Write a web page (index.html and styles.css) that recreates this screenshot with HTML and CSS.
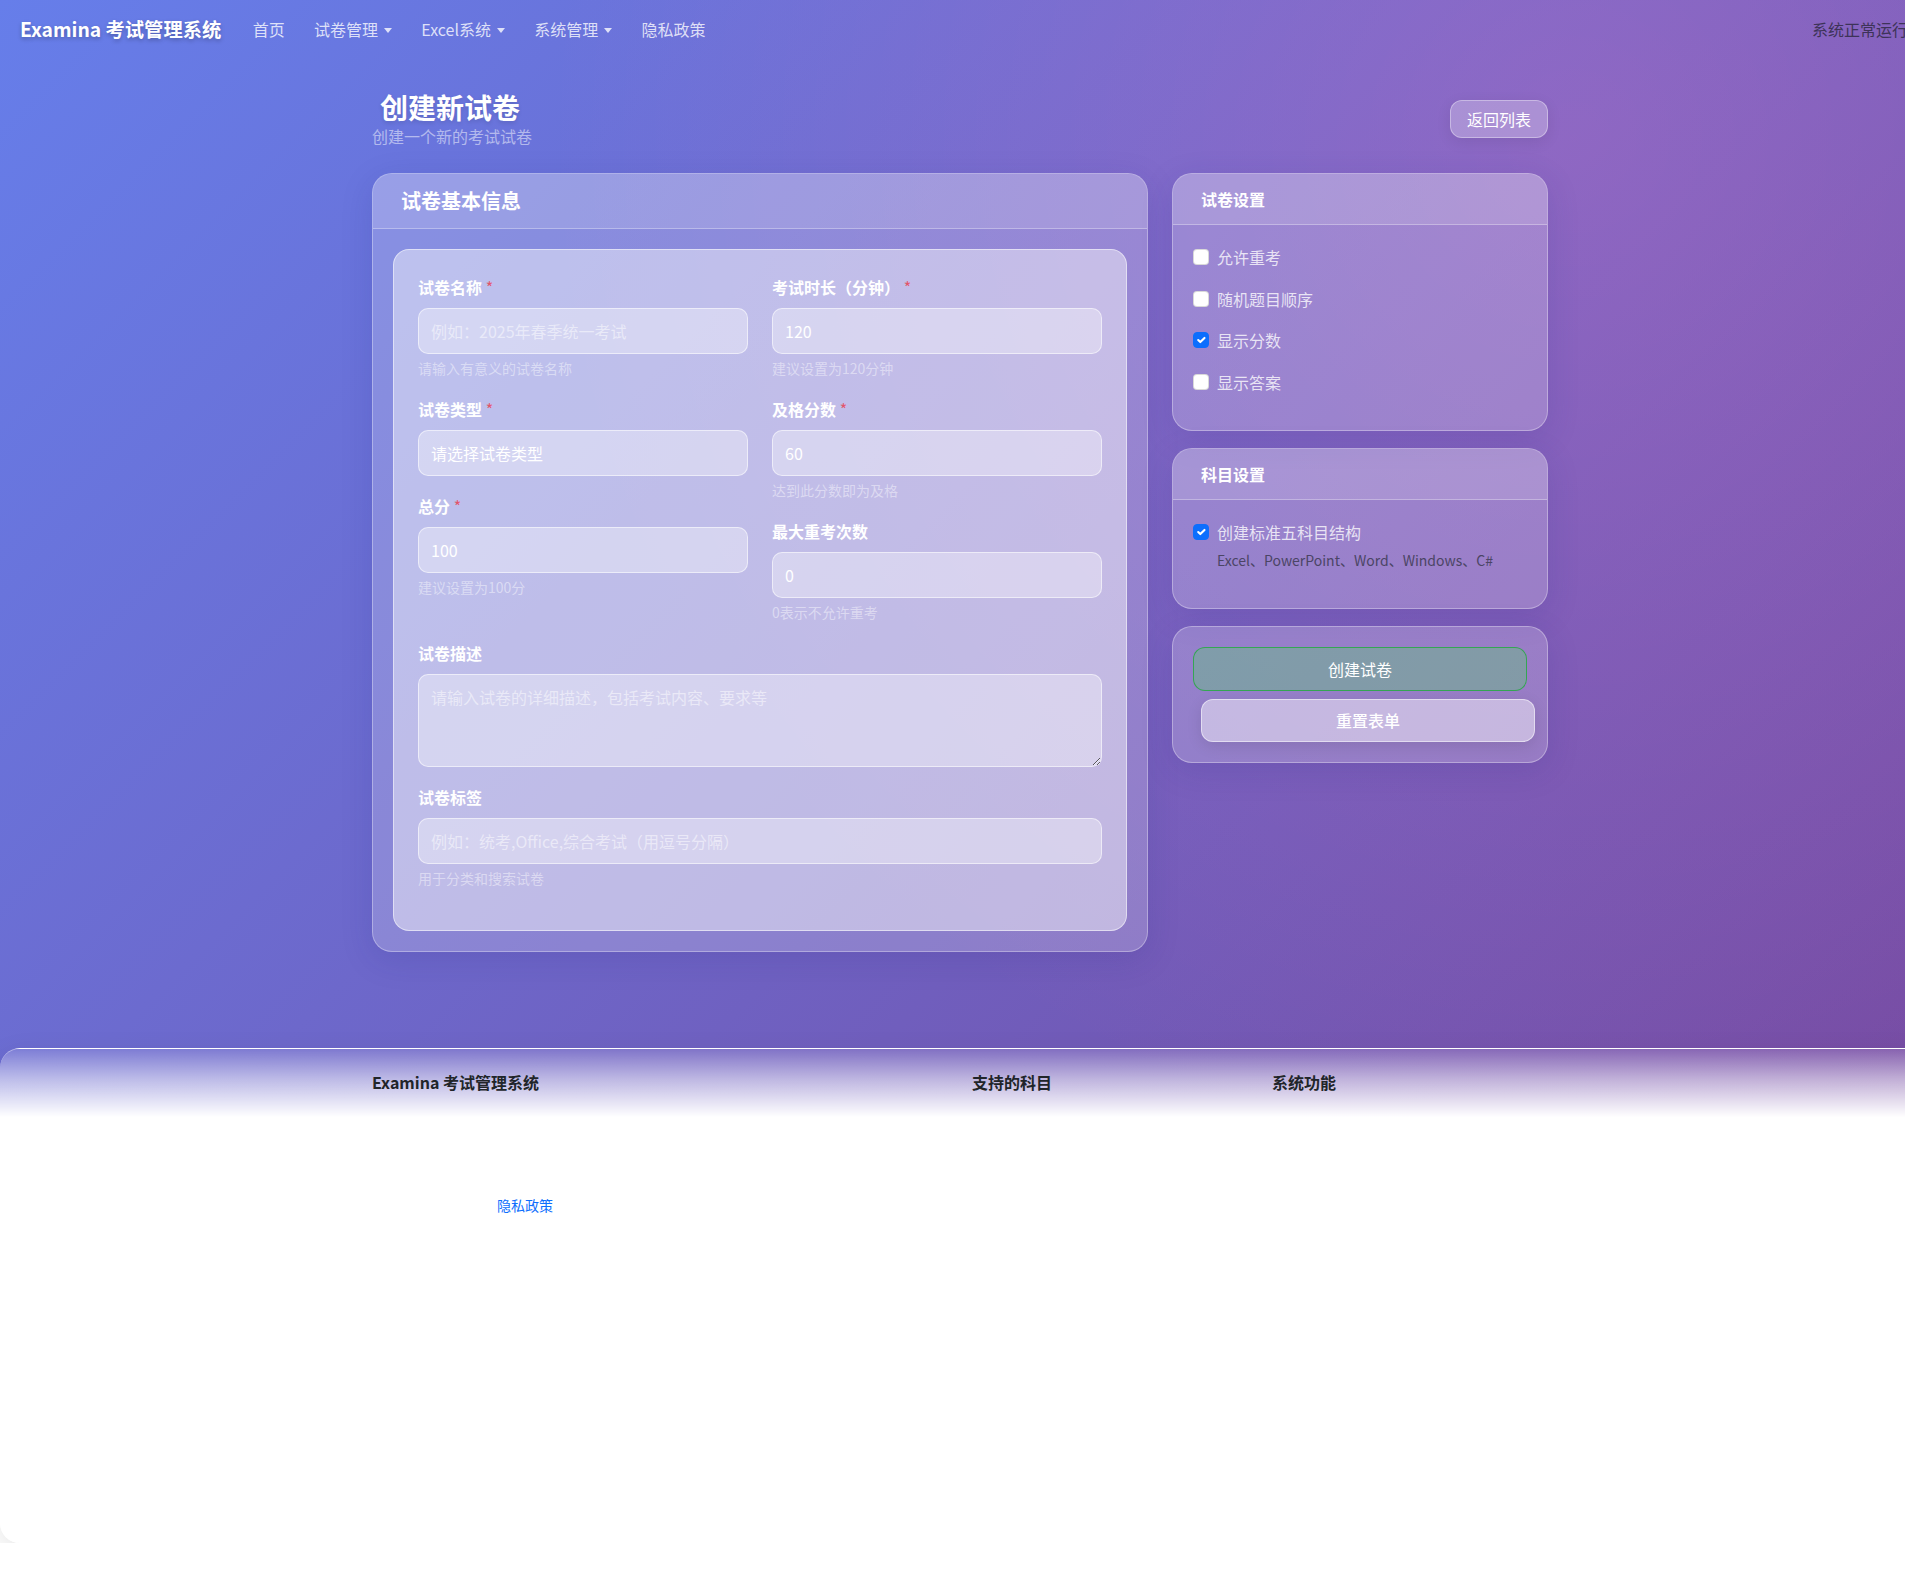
FILE: index.html
```html
<!DOCTYPE html>
<html lang="zh-CN">
<head>
<meta charset="utf-8">
<title>创建新试卷 - Examina 考试管理系统</title>
<link rel="stylesheet" href="styles.css">
</head>
<body>
<div class="page">
  <nav class="topbar">
    <a class="brand">Examina 考试管理系统</a>
    <ul class="nav">
      <li><a class="nav-link">首页</a></li>
      <li><a class="nav-link">试卷管理<span class="caret"></span></a></li>
      <li><a class="nav-link">Excel系统<span class="caret"></span></a></li>
      <li><a class="nav-link">系统管理<span class="caret"></span></a></li>
      <li><a class="nav-link">隐私政策</a></li>
    </ul>
    <span class="status">系统正常运行</span>
  </nav>

  <main class="container">
    <div class="page-head">
      <div class="head-text">
        <h1 class="page-title">创建新试卷</h1>
        <p class="page-sub">创建一个新的考试试卷</p>
      </div>
      <a class="btn-back">返回列表</a>
    </div>

    <div class="layout">
      <section class="card main-card">
        <div class="card-header"><h2 class="main-title">试卷基本信息</h2></div>
        <div class="card-body">
          <div class="panel">
            <div class="cols">
              <div class="col">
                <div class="field">
                  <label class="label">试卷名称 <span class="req">*</span></label>
                  <input class="input" type="text" placeholder="例如：2025年春季统一考试">
                  <div class="help">请输入有意义的试卷名称</div>
                </div>
                <div class="field">
                  <label class="label">试卷类型 <span class="req">*</span></label>
                  <select class="input select"><option>请选择试卷类型</option></select>
                </div>
                <div class="field">
                  <label class="label">总分 <span class="req">*</span></label>
                  <input class="input" type="text" value="100">
                  <div class="help">建议设置为100分</div>
                </div>
              </div>
              <div class="col">
                <div class="field">
                  <label class="label">考试时长（分钟） <span class="req">*</span></label>
                  <input class="input" type="text" value="120">
                  <div class="help">建议设置为120分钟</div>
                </div>
                <div class="field">
                  <label class="label">及格分数 <span class="req">*</span></label>
                  <input class="input" type="text" value="60">
                  <div class="help">达到此分数即为及格</div>
                </div>
                <div class="field">
                  <label class="label">最大重考次数</label>
                  <input class="input" type="text" value="0">
                  <div class="help">0表示不允许重考</div>
                </div>
              </div>
            </div>
            <div class="field">
              <label class="label">试卷描述</label>
              <textarea class="input textarea" rows="3" placeholder="请输入试卷的详细描述，包括考试内容、要求等"></textarea>
            </div>
            <div class="field">
              <label class="label">试卷标签</label>
              <input class="input" type="text" placeholder="例如：统考,Office,综合考试（用逗号分隔）">
              <div class="help">用于分类和搜索试卷</div>
            </div>
          </div>
        </div>
      </section>

      <aside class="sidebar">
        <section class="card side-card">
          <div class="card-header side-header"><h3 class="side-title">试卷设置</h3></div>
          <div class="card-body side-body">
            <label class="check"><span class="box"></span>允许重考</label>
            <label class="check"><span class="box"></span>随机题目顺序</label>
            <label class="check"><span class="box on"><svg width="14" height="14" viewBox="0 0 20 20"><path d="m6 10 3 3 6-6" fill="none" stroke="#fff" stroke-width="3" stroke-linecap="round" stroke-linejoin="round"/></svg></span>显示分数</label>
            <label class="check"><span class="box"></span>显示答案</label>
          </div>
        </section>

        <section class="card side-card">
          <div class="card-header side-header"><h3 class="side-title">科目设置</h3></div>
          <div class="card-body side-body">
            <label class="check solo"><span class="box on"><svg width="14" height="14" viewBox="0 0 20 20"><path d="m6 10 3 3 6-6" fill="none" stroke="#fff" stroke-width="3" stroke-linecap="round" stroke-linejoin="round"/></svg></span>创建标准五科目结构</label>
            <div class="subjects">Excel、PowerPoint、Word、Windows、C#</div>
          </div>
        </section>

        <section class="card side-card">
          <div class="card-body action-body">
            <button class="btn-create" type="button">创建试卷</button>
            <button class="btn-reset" type="button">重置表单</button>
          </div>
        </section>
      </aside>
    </div>
  </main>

  <footer class="footer">
    <div class="footer-inner">
      <div class="fcol">
        <h5 class="fhead">Examina 考试管理系统</h5>
        <p class="footer-links"><a class="flink">隐私政策</a></p>
      </div>
      <div class="fcol"><h5 class="fhead">支持的科目</h5></div>
      <div class="fcol"><h5 class="fhead">系统功能</h5></div>
    </div>
  </footer>
</div>
</body>
</html>
```

FILE: styles.css
```css
html {
  background: #fff;
  overflow: hidden;
}

body {
  margin: 0;
  font-family: "Noto Sans CJK SC", "Noto Sans", sans-serif;
  font-size: 16px;
  line-height: 1.5;
  color: #212529;
}

.page {
  width: 1920px;
  background-color: #fff;
  background-image:
    radial-gradient(circle at 82% 12%, rgba(255, 125, 200, 0.22), rgba(255, 125, 200, 0) 55%),
    linear-gradient(135deg, #667eea 0%, #764ba2 100%);
  background-size: 1920px 1150px;
  background-repeat: no-repeat;
}

/* ---------- navbar ---------- */
.topbar {
  height: 58px;
  display: flex;
  align-items: center;
  padding: 0 12px 0 20px;
  box-sizing: border-box;
}

.brand {
  font-size: 19.3px;
  font-weight: 700;
  color: #fff;
  text-shadow: 0 2px 4px rgba(0, 0, 0, 0.25);
  margin-right: 17px;
  line-height: 30px;
}

.nav {
  display: flex;
  list-style: none;
  margin: 0;
  padding: 0;
}

.nav-link {
  display: block;
  padding: 8px 14.6px;
  color: rgba(255, 255, 255, 0.78);
  line-height: 24px;
}

.caret {
  display: inline-block;
  margin-left: 6px;
  vertical-align: 3px;
  border-top: 5px solid;
  border-left: 4px solid transparent;
  border-right: 4px solid transparent;
}

.status {
  margin-left: auto;
  color: #3d3358;
}

/* ---------- main ---------- */
.container {
  width: 1176px;
  margin: 0 auto;
  padding: 32px 0 48px;
}

.page-head {
  display: flex;
  justify-content: space-between;
  align-items: center;
  margin-bottom: 25px;
}

.page-title {
  margin: 0 0 0 8px;
  font-size: 28px;
  line-height: 34px;
  font-weight: 700;
  color: #fff;
  text-shadow: 0 2px 4px rgba(0, 0, 0, 0.12);
}

.page-sub {
  margin: 0;
  line-height: 24px;
  color: rgba(255, 255, 255, 0.5);
}

.btn-back {
  padding: 6px 16px;
  line-height: 24px;
  color: #fff;
  background: rgba(255, 255, 255, 0.27);
  border: 1px solid rgba(255, 255, 255, 0.35);
  border-radius: 12px;
  box-shadow: 0 4px 15px rgba(0, 0, 0, 0.08);
}

.layout {
  display: grid;
  grid-template-columns: 776px 376px;
  gap: 24px;
  align-items: start;
}

.card {
  background: rgba(255, 255, 255, 0.2);
  border: 1px solid rgba(255, 255, 255, 0.32);
  border-radius: 20px;
  box-shadow: 0 8px 32px rgba(31, 38, 135, 0.15);
  overflow: hidden;
}

.card-header {
  padding: 15px 28px;
  background: rgba(255, 255, 255, 0.14);
  border-bottom: 1px solid rgba(255, 255, 255, 0.3);
}

.main-title {
  margin: 0;
  font-size: 20px;
  line-height: 24px;
  font-weight: 700;
  color: #fff;
}

.main-card .card-body {
  padding: 20px;
}

.panel {
  background: rgba(255, 255, 255, 0.45);
  border: 1px solid rgba(255, 255, 255, 0.5);
  border-radius: 16px;
  padding: 25px 24px 23px;
}

.cols {
  display: grid;
  grid-template-columns: 1fr 1fr;
  column-gap: 24px;
}

.field {
  margin-bottom: 18px;
}

.label {
  display: block;
  font-weight: 700;
  color: #fff;
  line-height: 24px;
  margin-bottom: 9px;
}

.req {
  color: #e2566a;
  font-weight: 400;
}

.input {
  display: block;
  width: 100%;
  box-sizing: border-box;
  height: 46px;
  margin: 0;
  padding: 10px 12px;
  font-family: inherit;
  font-size: 16px;
  line-height: 24px;
  color: #fff;
  background: rgba(255, 255, 255, 0.35);
  border: 1px solid rgba(255, 255, 255, 0.55);
  border-radius: 10px;
  outline: none;
}

.input::placeholder {
  color: rgba(255, 255, 255, 0.5);
}

.select {
  appearance: none;
  -webkit-appearance: none;
}

.textarea {
  height: 93px;
  resize: vertical;
}

.help {
  margin-top: 4px;
  font-size: 14px;
  line-height: 21px;
  color: rgba(255, 255, 255, 0.45);
}

/* ---------- sidebar ---------- */
.sidebar {
  display: flex;
  flex-direction: column;
  gap: 17px;
}

.side-header {
  padding: 13px 28px;
}

.side-title {
  margin: 0;
  font-size: 16px;
  line-height: 24px;
  font-weight: 700;
  color: #fff;
}

.side-body {
  padding: 20px 20px 36.5px;
}

.check {
  display: flex;
  align-items: center;
  gap: 8px;
  line-height: 24px;
  color: rgba(255, 255, 255, 0.78);
  margin-bottom: 17.5px;
}

.check:last-child,
.check.solo {
  margin-bottom: 0;
}

.box {
  width: 16px;
  height: 16px;
  box-sizing: border-box;
  flex: none;
  border-radius: 4px;
  background: #fff;
  border: 1px solid rgba(0, 0, 0, 0.15);
  display: flex;
  align-items: center;
  justify-content: center;
}

.box.on {
  background: #0d6efd;
  border-color: #0d6efd;
}

.subjects {
  margin: 6px 0 0 24px;
  font-size: 14px;
  line-height: 21px;
  color: #4b4565;
}

.action-body {
  padding: 20px;
  display: flex;
  flex-direction: column;
  gap: 8px;
}

.btn-create,
.btn-reset {
  font-family: inherit;
  font-size: 16px;
  line-height: 24px;
  color: #fff;
  border-radius: 12px;
  cursor: pointer;
}

.btn-create {
  height: 44px;
  background: rgba(90, 210, 110, 0.35);
  border: 1px solid rgba(40, 167, 69, 0.85);
}

.btn-reset {
  height: 43px;
  margin-left: 8px;
  margin-right: -8px;
  font-weight: 500;
  background: rgba(255, 255, 255, 0.45);
  border: 1px solid rgba(255, 255, 255, 0.5);
  box-shadow: 0 4px 15px rgba(0, 0, 0, 0.1);
}

/* ---------- footer ---------- */
.footer {
  margin-top: 48px;
  height: 495px;
  box-sizing: border-box;
  padding-top: 21px;
  border-top: 1px solid rgba(255, 255, 255, 0.4);
  border-radius: 20px 0 0 20px;
  background: linear-gradient(180deg, rgba(255, 255, 255, 0.12) 0px, rgba(255, 255, 255, 0.55) 30px, #fff 68px);
  box-shadow: 0 10px 30px rgba(0, 0, 0, 0.1);
}

.footer-inner {
  width: 1176px;
  margin: 0 auto;
  display: grid;
  grid-template-columns: 600px 300px 1fr;
}

.fhead {
  margin: 0;
  font-size: 16px;
  line-height: 24px;
  font-weight: 700;
  color: #212529;
}

.footer-links {
  margin: 101px 0 0;
  padding-left: 125px;
  font-size: 14px;
  line-height: 21px;
}

.flink {
  color: #0d6efd;
  text-decoration: none;
}
```
